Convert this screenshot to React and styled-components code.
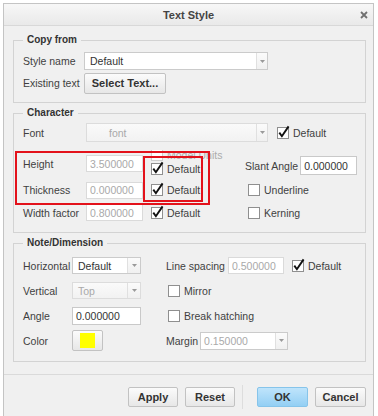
import React from "react";
import styled, { createGlobalStyle } from "styled-components";

const GlobalStyle = createGlobalStyle`
  html, body {
    margin: 0;
    padding: 0;
    background: #ffffff;
  }
  body {
    font-family: "Liberation Sans", Arial, sans-serif;
  }
`;

const Window = styled.div`
  margin: 3px 0 0 3px;
  width: 371px;
  box-sizing: border-box;
  border: 1px solid #c4c4c4;
  background: #f0f0f0;
  color: #3f3f3f;
  font-size: 10.5px;
`;

const TitleBar = styled.div`
  height: 21px;
  display: grid;
  grid-template-columns: 1fr auto 1fr;
  align-items: center;
  background: linear-gradient(#f7f7f7, #e9e9e9);
  border-bottom: 1px solid #d8d8d8;
`;

const Title = styled.div`
  grid-column: 2;
  font-size: 11px;
  font-weight: bold;
  color: #444;
`;

const Close = styled.div`
  justify-self: end;
  margin-right: 5px;
  display: flex;
`;

const Body = styled.div`
  display: flex;
  flex-direction: column;
  gap: 3px;
  padding: 7px 7px 12px 9px;
`;

const Group = styled.fieldset`
  margin: 0;
  padding: 0 7px ${(p) => p.$pb}px 9px;
  border: 1px solid #d3d3d3;
  min-width: 0;
`;

const Legend = styled.legend`
  padding: 0 4px;
  font-size: 10px;
  font-weight: bold;
  line-height: 14px;
  color: #333;
`;

const FormGrid = styled.div`
  position: relative;
  display: grid;
  grid-template-columns: ${(p) => p.$cols};
  grid-template-rows: ${(p) => p.$rows};
  align-items: center;
  margin-top: ${(p) => p.$mt || 0}px;
`;

const Row = styled.div`
  display: flex;
  align-items: center;
  height: ${(p) => (p.$h ? `${p.$h}px` : "auto")};
  margin-top: ${(p) => p.$mt || 0}px;
  margin-left: ${(p) => p.$ml || 0}px;
`;

const Label = styled.span`
  flex: none;
  width: ${(p) => (p.$w ? `${p.$w}px` : "auto")};
  margin-right: ${(p) => p.$mr || 0}px;
  white-space: nowrap;
  color: #3f3f3f;
`;

const Field = styled.div`
  flex: none;
  box-sizing: border-box;
  width: ${(p) => p.$w}px;
  height: ${(p) => p.$h}px;
  margin-left: ${(p) => p.$ml || 0}px;
  display: flex;
  align-items: center;
  padding-left: ${(p) => p.$pl ?? 3}px;
  background: #ffffff;
  border: 1px solid ${(p) => (p.$muted ? "#dadada" : "#c9c9c9")};
  color: ${(p) => (p.$muted ? "#a9a9a9" : "#333")};
  white-space: nowrap;
  overflow: hidden;
`;

const SelectBox = styled.div`
  flex: none;
  box-sizing: border-box;
  width: ${(p) => p.$w}px;
  height: ${(p) => p.$h}px;
  margin-left: ${(p) => p.$ml || 0}px;
  display: flex;
  border: 1px solid ${(p) => (p.$disabled ? "#dcdcdc" : "#cbcbcb")};
  background: ${(p) =>
    p.$disabled ? "linear-gradient(#fafafa, #f2f2f2)" : "#ffffff"};
`;

const SelectValue = styled.div`
  flex: 1;
  display: flex;
  align-items: center;
  padding-left: ${(p) => p.$pl}px;
  color: ${(p) => (p.$muted ? "#a9a9a9" : "#333")};
  white-space: nowrap;
`;

const SelectArrow = styled.div`
  flex: none;
  width: ${(p) => p.$w}px;
  display: flex;
  align-items: center;
  justify-content: center;
  border-left: 1px solid #e0e0e0;
  background: linear-gradient(#fbfbfb, #f0f0f0);
`;

const Button = styled.button`
  flex: none;
  box-sizing: border-box;
  width: ${(p) => p.$w}px;
  height: ${(p) => p.$h || 20}px;
  padding: 0;
  font-family: inherit;
  font-size: 11px;
  font-weight: bold;
  color: #333;
  border: 1px solid ${(p) => (p.$primary ? "#86c4ea" : "#c2c2c2")};
  border-radius: 2px;
  background: ${(p) =>
    p.$primary
      ? "linear-gradient(#bfe4fb, #93cff4)"
      : "linear-gradient(#fbfbfb, #e7e7e7)"};
  display: flex;
  align-items: center;
  justify-content: center;
`;

const Swatch = styled.span`
  width: 15px;
  height: 15px;
  background: #ffff00;
`;

const CheckRow = styled.label`
  display: flex;
  align-items: center;
  gap: 4px;
  margin-left: ${(p) => p.$ml || 0}px;
  white-space: nowrap;
  color: ${(p) => (p.$dim ? "#acacac" : "#3f3f3f")};
`;

const Stack = styled.div`
  align-self: stretch;
  display: flex;
  flex-direction: column;
  justify-content: flex-end;
  padding-bottom: 5px;
`;

const Clipped = styled.div`
  height: 14px;
  display: flex;
  align-items: center;
  clip-path: inset(2px 0 0 0);
`;

const Line = styled.div`
  height: 14px;
  display: flex;
  align-items: center;
`;

const Annotation = styled.div`
  position: absolute;
  left: ${(p) => p.$x}px;
  top: ${(p) => p.$y}px;
  width: ${(p) => p.$w}px;
  height: ${(p) => p.$h}px;
  box-sizing: border-box;
  border: 2px solid #e3121b;
  pointer-events: none;
`;

const Footer = styled.div`
  display: flex;
  justify-content: flex-end;
  align-items: center;
  gap: 7px;
  padding: 10px 7px 8px 0;
  border-top: 1px solid #dadada;
`;

const FooterSep = styled.div`
  width: 1px;
  height: 24px;
  margin: 0 7px 0 0;
  background: #dddddd;
`;

function Arrow() {
  return (
    <svg width="5" height="3" viewBox="0 0 5 3">
      <path d="M0 0 H5 L2.5 3 Z" fill="#9a9a9a" />
    </svg>
  );
}

function Select({ w, h, arrow, value, pl = 5, muted, disabled, ml }) {
  return (
    <SelectBox $w={w} $h={h} $disabled={disabled} $ml={ml}>
      <SelectValue $pl={pl} $muted={muted}>
        {value}
      </SelectValue>
      <SelectArrow $w={arrow}>
        <Arrow />
      </SelectArrow>
    </SelectBox>
  );
}

function Check({ checked, children, dim, ml }) {
  return (
    <CheckRow $dim={dim} $ml={ml}>
      <svg width="12" height="12" viewBox="0 0 12 12" style={{ overflow: "visible" }}>
        <rect
          x="0.5"
          y="0.5"
          width="11"
          height="11"
          fill="#fff"
          stroke={dim ? "#cfcfcf" : "#8f8f8f"}
        />
        {checked && (
          <path
            d="M2.3 5.6 L4.9 9.2 L11.6 -0.6"
            fill="none"
            stroke="#111"
            strokeWidth="1.9"
          />
        )}
      </svg>
      <span>{children}</span>
    </CheckRow>
  );
}

export default function App() {
  return (
    <>
      <GlobalStyle />
      <Window>
        <TitleBar>
          <Title>Text Style</Title>
          <Close>
            <svg width="8" height="8" viewBox="0 0 8 8">
              <path d="M1 1 L7 7 M7 1 L1 7" stroke="#707070" strokeWidth="1.8" />
            </svg>
          </Close>
        </TitleBar>

        <Body>
          <Group $pb={8}>
            <Legend>Copy from</Legend>
            <FormGrid $cols="61px 1fr" $rows="22px 22px" $mt={3}>
              <Label>Style name</Label>
              <Select w={184} h={18} arrow={10} value="Default" />
              <Label>Existing text</Label>
              <Button $w={82} $h={21}>
                Select Text...
              </Button>
            </FormGrid>
          </Group>

          <Group $pb={6}>
            <Legend>Character</Legend>
            <Row $h={21} $mt={2}>
              <Label $w={63}>Font</Label>
              <Select w={182} h={19} arrow={10} value="font" pl={22} muted disabled />
              <Check checked ml={9}>
                Default
              </Check>
            </Row>
            <FormGrid $cols="63px 57px 102px 1fr" $rows="35px 18px 27px" $mt={3}>
              <Label>Height</Label>
              <Field $w={57} $h={17} $muted>
                3.500000
              </Field>
              <Stack>
                <Clipped>
                  <Check dim ml={8}>
                    Model Units
                  </Check>
                </Clipped>
                <Line>
                  <Check checked ml={8}>
                    Default
                  </Check>
                </Line>
              </Stack>
              <Row $mt={4}>
                <Label $mr={2}>Slant Angle</Label>
                <Field $w={57} $h={19}>
                  0.000000
                </Field>
              </Row>

              <Label>Thickness</Label>
              <Field $w={57} $h={17} $muted>
                0.000000
              </Field>
              <Check checked ml={8}>
                Default
              </Check>
              <Check ml={3}>Underline</Check>

              <Label>Width factor</Label>
              <Field $w={57} $h={17} $muted>
                0.800000
              </Field>
              <Check checked ml={8}>
                Default
              </Check>
              <Check ml={3}>Kerning</Check>

              <Annotation $x={-8} $y={5} $w={195} $h={54} />
              <Annotation $x={120} $y={10} $w={60} $h={46} />
            </FormGrid>
          </Group>

          <Group $pb={8}>
            <Legend>Note/Dimension</Legend>
            <FormGrid $cols="49px 94px 1fr" $rows="25px 25px 25px 25px" $mt={3}>
              <Label>Horizontal</Label>
              <Select w={69} h={17} arrow={12} value="Default" pl={5} />
              <Row>
                <Label $mr={3}>Line spacing</Label>
                <Field $w={56} $h={17} $muted>
                  0.500000
                </Field>
                <Check checked ml={8}>
                  Default
                </Check>
              </Row>

              <Label>Vertical</Label>
              <Select w={69} h={17} arrow={12} value="Top" pl={5} muted disabled />
              <Check ml={2}>Mirror</Check>

              <Label>Angle</Label>
              <Field $w={69} $h={18}>
                0.000000
              </Field>
              <Check ml={2}>Break hatching</Check>

              <Label>Color</Label>
              <Button $w={31} $h={21}>
                <Swatch />
              </Button>
              <Row>
                <Label $mr={2}>Margin</Label>
                <Select w={88} h={18} arrow={11} value="0.150000" pl={3} muted />
              </Row>
            </FormGrid>
          </Group>
        </Body>

        <Footer>
          <Button $w={50}>Apply</Button>
          <Button $w={50}>Reset</Button>
          <FooterSep />
          <Button $w={51} $primary>
            OK
          </Button>
          <Button $w={51}>Cancel</Button>
        </Footer>
      </Window>
    </>
  );
}
